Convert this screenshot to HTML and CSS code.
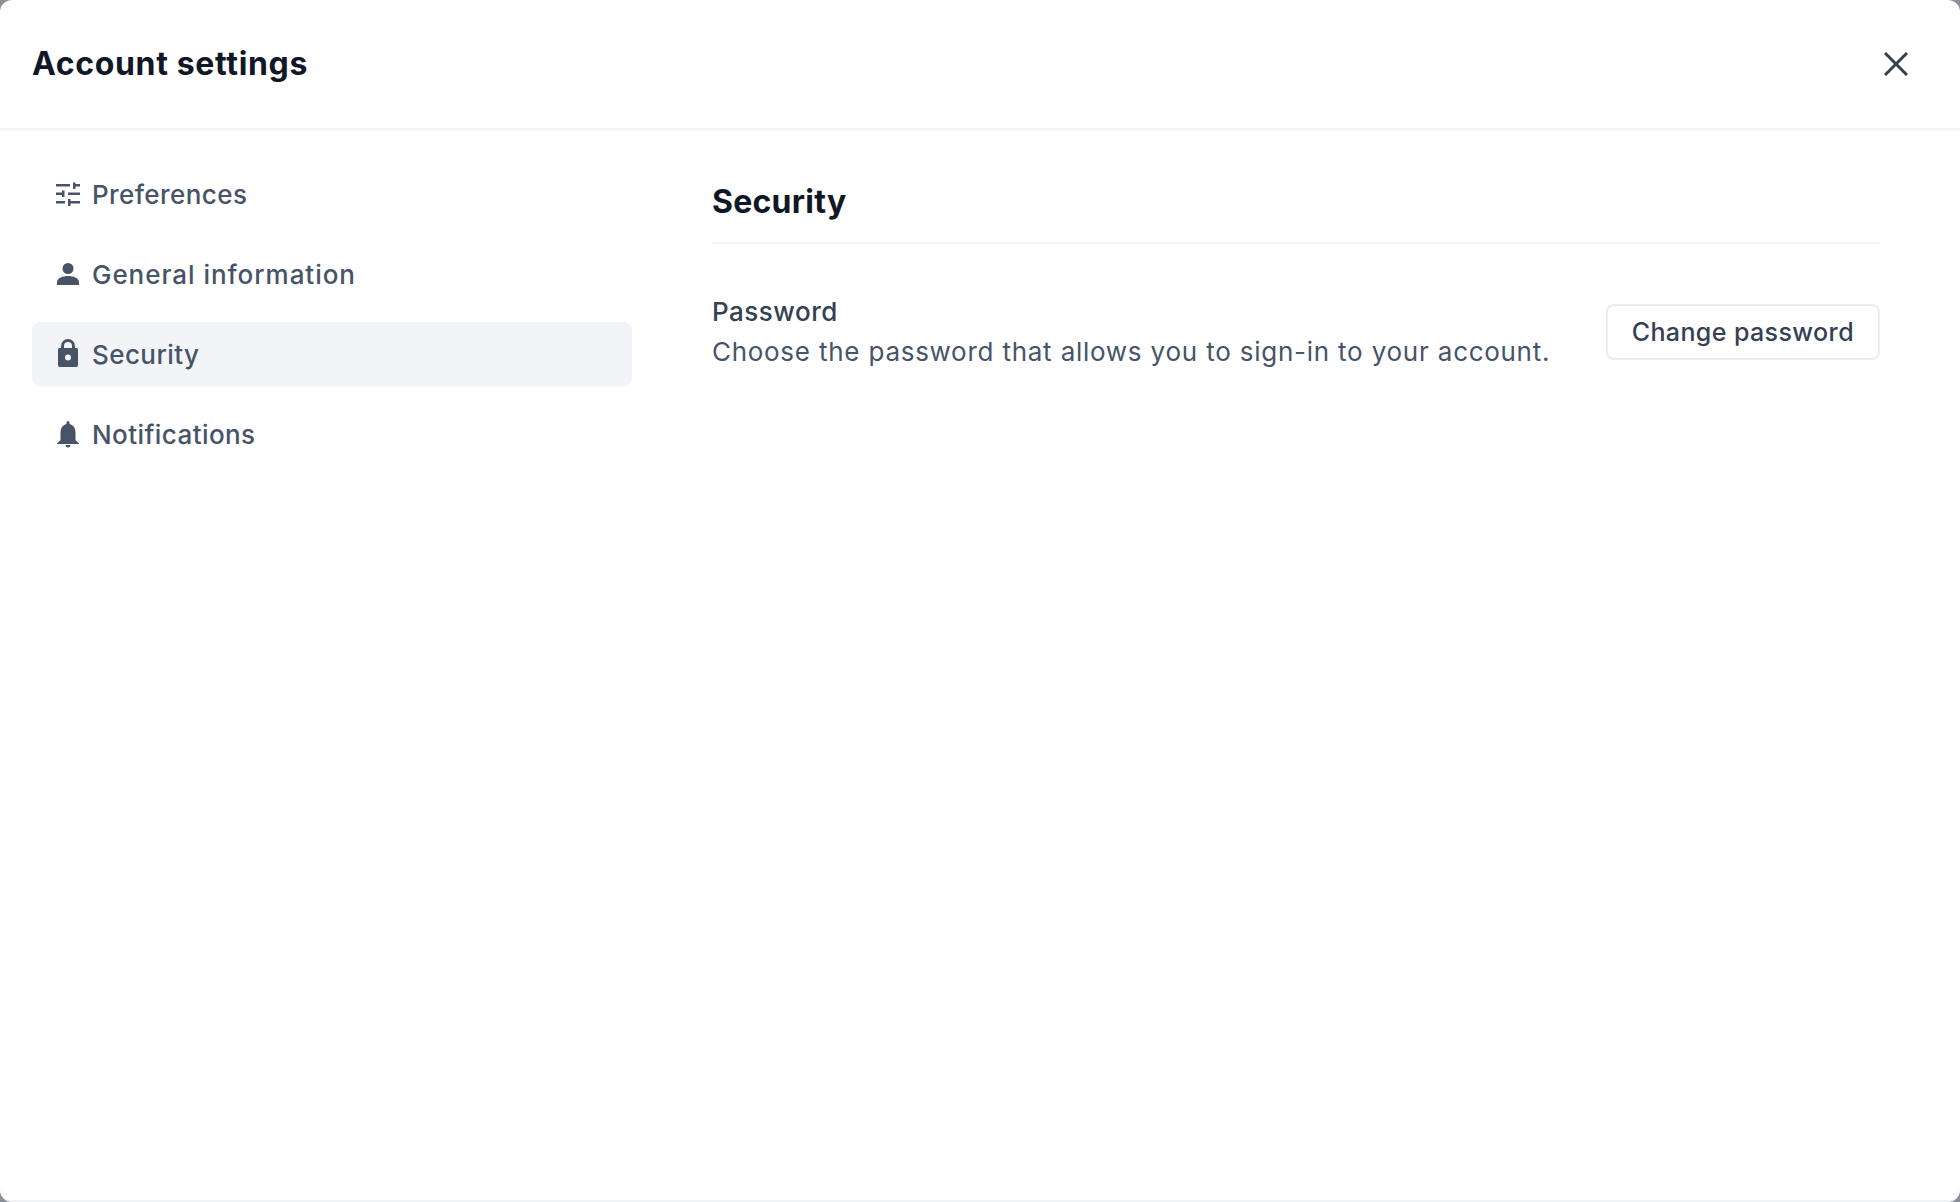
FILE: index.html
```html
<!DOCTYPE html>
<html lang="en">
<head>
    <meta charset="UTF-8">
    <title>Account settings</title>
    <link rel="stylesheet" href="styles.css">
</head>
<body>
    <div class="dialog">
        <header class="dialog-header">
            <h1 class="dialog-title">Account settings</h1>
            <button class="close-btn" aria-label="Close">
                <svg width="24" height="24" viewBox="0 0 24 24"><path d="M1 1 L23 23 M23 1 L1 23" fill="none" stroke="currentColor" stroke-width="3"/></svg>
            </button>
        </header>

        <div class="dialog-body">
            <nav class="side-nav">
                <a class="nav-item">
                    <svg class="nav-icon" viewBox="0 0 24 24"><path d="M0 2h14v2.500H0zM17 .5h2.500V7H17zM19.500 2H24v2.500h-4.500zM0 10.500h6V13H0zM6 8.500h2.500V15H6zM12 10.500h12V13H12zM0 19h9v2.500H0zM12 17h2.500v7H12zM14.500 19H24v2.500h-9.500z" fill="currentColor"/></svg>
                    Preferences
                </a>
                <a class="nav-item nav-item-wide">
                    <svg class="nav-icon" viewBox="0 0 24 24"><circle cx="12" cy="6.500" r="5.500" fill="currentColor"/><path d="M1 23v-3c0-4 6-6 11-6s11 2 11 6v3z" fill="currentColor"/></svg>
                    General information
                </a>
                <a class="nav-item active">
                    <svg class="nav-icon" viewBox="0 0 24 24"><path fill-rule="evenodd" d="M5 6V4a7 7 0 0 1 14 0v2h1.500A1.500 1.500 0 0 1 22 7.500V23a2 2 0 0 1-2 2H4a2 2 0 0 1-2-2V7.500A1.500 1.500 0 0 1 3.500 6zM8 6h8V4a4 4 0 0 0-8 0zM12 12.500a3 3 0 1 0 0 6 3 3 0 0 0 0-6z" fill="currentColor"/></svg>
                    Security
                </a>
                <a class="nav-item">
                    <svg class="nav-icon" viewBox="0 0 24 24"><path d="M10.500 .5a1.500 1.500 0 0 1 3 0V2c4 1 6 4.500 6 8.500V18l3.500 3.500V22H1v-.5L4.500 18v-7.500C4.500 6.500 6.500 3 10.500 2zM9.500 23h5a2.500 2.500 0 0 1-5 0z" fill="currentColor"/></svg>
                    Notifications
                </a>
            </nav>

            <main class="content">
                <h2 class="section-title">Security</h2>
                <div class="setting-row">
                    <div class="setting-text">
                        <div class="setting-label">Password</div>
                        <div class="setting-desc">Choose the password that allows you to sign-in to your account.</div>
                    </div>
                    <button class="outline-btn">Change password</button>
                </div>
            </main>
        </div>
    </div>
</body>
</html>
```
FILE: styles.css
```css
html, body {
    height: 100%;
}

body {
    margin: 0;
    background: #8a8f98;
    font-family: Inter, "Liberation Sans", sans-serif;
}

.dialog {
    height: 1200px;
    background: #fff;
    border-radius: 12px;
    display: flex;
    flex-direction: column;
    border-bottom: 2px solid #f2f4f7;
}

/* Header */
.dialog-header {
    height: 128px;
    padding: 0 32px;
    display: flex;
    align-items: center;
    justify-content: space-between;
    border-bottom: 2px solid #f2f4f7;
}

.dialog-title {
    margin: 0 0 2px;
    font-size: 32px;
    letter-spacing: 0.65px;
    font-weight: 700;
    color: #101828;
}

.close-btn {
    width: 24px;
    height: 24px;
    margin-right: 20px;
    padding: 0;
    border: none;
    background: none;
    color: #344054;
}

/* Left nav */
.dialog-body {
    display: flex;
    padding: 32px 80px 0 32px;
}

.side-nav {
    width: 600px;
    display: flex;
    flex-direction: column;
    gap: 16px;
    flex-shrink: 0;
}

.nav-item {
    height: 64px;
    padding: 0 24px;
    display: flex;
    align-items: center;
    gap: 12px;
    border-radius: 8px;
    font-size: 26px;
    letter-spacing: 0.42px;
    font-weight: 500;
    color: #475467;
}

.nav-item-wide {
    letter-spacing: 0.95px;
}

.nav-item.active {
    background: #f2f4f7;
}

.nav-icon {
    width: 24px;
    height: 24px;
    overflow: visible;
}

/* Security section */
.content {
    flex: 1;
    margin-left: 80px;
}

.section-title {
    margin: 18px 0 0;
    padding: 0 0 18px;
    font-size: 32px;
    letter-spacing: 0.25px;
    line-height: 44px;
    font-weight: 700;
    color: #101828;
    border-bottom: 2px solid #f2f4f7;
}

.setting-row {
    margin-top: 48px;
    display: flex;
    align-items: center;
    justify-content: space-between;
}

.setting-label {
    font-size: 26px;
    letter-spacing: 0.5px;
    line-height: 40px;
    font-weight: 500;
    color: #344054;
}

.setting-desc {
    font-size: 26px;
    letter-spacing: 0.7px;
    word-spacing: 0.4px;
    line-height: 40px;
    color: #475467;
}

.outline-btn {
    height: 56px;
    padding: 0 24px;
    font-family: inherit;
    font-size: 25px;
    letter-spacing: 0.4px;
    font-weight: 500;
    color: #344054;
    background: #fff;
    border: 2px solid #eaecf0;
    border-radius: 8px;
}
```
